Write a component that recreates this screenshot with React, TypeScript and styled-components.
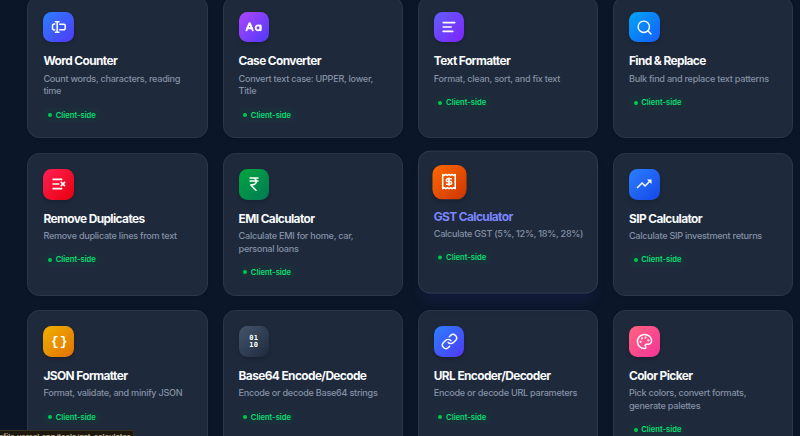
import type { ReactNode } from 'react';
import styled, { createGlobalStyle, css } from 'styled-components';
import { CaseSensitive, Link, Palette, Search } from 'lucide-react';
import { MdCurrencyRupee, MdTrendingUp } from 'react-icons/md';

interface Tool {
    name: string;
    description: string;
    gradient: string;
    icon: ReactNode;
    hovered?: boolean;
}

const CursorInputIcon = () => (
    <svg width="16" height="16" viewBox="0 0 16 16" fill="none" stroke="currentColor" strokeWidth="1.5" strokeLinecap="round" strokeLinejoin="round">
        <path d="M4.4 2.8h3.6M4.4 13.2h3.6M6.2 2.8v10.4" />
        <path d="M3.8 5H3.4A2 2 0 0 0 1.5 7v2a2 2 0 0 0 1.9 2h.4" />
        <path d="M8.8 5.2h4A1.4 1.4 0 0 1 14.2 6.6v2.8a1.4 1.4 0 0 1-1.4 1.4h-4" />
    </svg>
);

const AlignIcon = () => (
    <svg width="16" height="16" viewBox="0 0 16 16" fill="none" stroke="currentColor" strokeWidth="1.6" strokeLinecap="round">
        <path d="M2.2 3.6h11.6M2.2 8h8M2.2 12.4h9.6" />
    </svg>
);

const RemoveLinesIcon = () => (
    <svg width="16" height="16" viewBox="0 0 16 16" fill="none" stroke="currentColor" strokeWidth="1.6">
        <path d="M1.5 3.4h9.8M1.5 8h6.8M1.5 12.6h9.8" />
        <path d="M9.8 5.9l4.2 4.2M14 5.9l-4.2 4.2" />
    </svg>
);

const ReceiptIcon = () => (
    <svg width="16" height="16" viewBox="0 0 16 16" fill="none" stroke="currentColor" strokeLinejoin="round">
        <path d="M2.3 1.6l1.4.8 1.4-.8 1.45.8L8 1.6l1.45.8 1.4-.8 1.45.8 1.4-.8v12.8l-1.4-.8-1.45.8-1.4-.8-1.45.8-1.45-.8-1.45.8-1.4-.8-1.4.8z" strokeWidth="1.4" />
        <path d="M10.6 5.5H6.8a1.2 1.2 0 0 0 0 2.5h2.4a1.2 1.2 0 0 1 0 2.5H5.3M8 4.2v7.6" strokeWidth="1.4" />
    </svg>
);

const BracesIcon = () => <Braces>{'{ }'}</Braces>;

const BinaryIcon = () => (
    <Bits>
        <span>01</span>
        <span>10</span>
    </Bits>
);

const TOOLS: Tool[] = [
    {
        name: 'Word Counter',
        description: 'Count words, characters, reading time',
        gradient: '#2b7fff, #4f39f6',
        icon: <CursorInputIcon />,
    },
    {
        name: 'Case Converter',
        description: 'Convert text case: UPPER, lower, Title',
        gradient: '#ad46ff, #4f39f6',
        icon: <CaseSensitive size={17} strokeWidth={2.6} />,
    },
    {
        name: 'Text Formatter',
        description: 'Format, clean, sort, and fix text',
        gradient: '#615fff, #7f22fe',
        icon: <AlignIcon />,
    },
    {
        name: 'Find & Replace',
        description: 'Bulk find and replace text patterns',
        gradient: '#00a6f4, #155dfc',
        icon: <Search size={17} strokeWidth={2} />,
    },
    {
        name: 'Remove Duplicates',
        description: 'Remove duplicate lines from text',
        gradient: '#ff2056, #e7000b',
        icon: <RemoveLinesIcon />,
    },
    {
        name: 'EMI Calculator',
        description: 'Calculate EMI for home, car, personal loans',
        gradient: '#00a63e, #007a55',
        icon: <MdCurrencyRupee size={18} />,
    },
    {
        name: 'GST Calculator',
        description: 'Calculate GST (5%, 12%, 18%, 28%)',
        gradient: '#ff6900, #ca3500',
        icon: <ReceiptIcon />,
        hovered: true,
    },
    {
        name: 'SIP Calculator',
        description: 'Calculate SIP investment returns',
        gradient: '#2b7fff, #1447e6',
        icon: <MdTrendingUp size={18} />,
    },
    {
        name: 'JSON Formatter',
        description: 'Format, validate, and minify JSON',
        gradient: '#f0b100, #e17100',
        icon: <BracesIcon />,
    },
    {
        name: 'Base64 Encode/Decode',
        description: 'Encode or decode Base64 strings',
        gradient: '#45556c, #1d293d',
        icon: <BinaryIcon />,
    },
    {
        name: 'URL Encoder/Decoder',
        description: 'Encode or decode URL parameters',
        gradient: '#2b7fff, #4f39f6',
        icon: <Link size={17} strokeWidth={2} />,
    },
    {
        name: 'Color Picker',
        description: 'Pick colors, convert formats, generate palettes',
        gradient: '#ff637e, #f6339a',
        icon: <Palette size={17} strokeWidth={2.1} />,
    },
];

export default function App() {
    return (
        <>
            <GlobalStyle />
            <Page>
                <Grid>
                    {TOOLS.map((tool) => (
                        <ToolCard key={tool.name} tool={tool} />
                    ))}
                </Grid>
                <LinkStatus>mfile.vercel.app/tools/gst-calculator</LinkStatus>
            </Page>
        </>
    );
}

function ToolCard({ tool }: { tool: Tool }) {
    return (
        <Card $hovered={tool.hovered}>
            <IconTile $gradient={tool.gradient} $hovered={tool.hovered}>{tool.icon}</IconTile>
            <Title $hovered={tool.hovered}>{tool.name}</Title>
            <Description>{tool.description}</Description>
            <Badge>
                <Dot />
                Client-side
            </Badge>
        </Card>
    );
}

const GlobalStyle = createGlobalStyle`
  * {
    box-sizing: border-box;
  }

  body {
    margin: 0;
    background: #0c1629;
    font-family: Inter, 'Liberation Sans', sans-serif;
    overflow: hidden;
  }
`;

const Page = styled.div`
  position: relative;
  height: 436px;
  overflow: hidden;
  padding-left: 27.4px;
  background: #0c1629;
`;

const Grid = styled.div`
  display: grid;
  grid-template-columns: repeat(4, 180.4px);
  grid-auto-rows: 142.6px;
  gap: 14.8px;
  margin-top: -4.3px;
`;

const Card = styled.div<{ $hovered?: boolean }>`
  display: flex;
  flex-direction: column;
  align-items: flex-start;
  padding: 15px 13.5px 15px 15px;
  border: 1px solid #2a3649;
  border-radius: 12px;
  background: #1e293b;
  box-shadow: 0 1px 3px rgba(0, 0, 0, 0.1);
  ${({ $hovered }) => $hovered && css`
    transform: translateY(-2.4px);
    border-color: #303b50;
    box-shadow: 0 12px 14px -4px rgba(49, 65, 160, 0.14);
  `}
`;

const IconTile = styled.div<{ $gradient: string; $hovered?: boolean }>`
  display: flex;
  align-items: center;
  justify-content: center;
  flex-shrink: 0;
  width: 30.6px;
  height: 30.6px;
  border-radius: 8.5px;
  color: #fff;
  background: linear-gradient(135deg, ${({ $gradient }) => $gradient});
  box-shadow: 0 2px 4px rgba(0, 0, 0, 0.18);
  transform: ${({ $hovered }) => ($hovered ? 'scale(1.1)' : 'none')};
`;

const Braces = styled.span`
  font: bold 13px/1 'Liberation Mono', monospace;
  letter-spacing: -1.2px;
  word-spacing: -4.5px;
`;

const Bits = styled.span`
  display: flex;
  flex-direction: column;
  font: bold 7px/6.4px 'DejaVu Sans Mono', monospace;
  letter-spacing: 0.5px;

  span {
    height: 6.4px;
  }
`;

const Title = styled.h3<{ $hovered?: boolean }>`
  margin: 11px 0 4px;
  font-size: 11.9px;
  font-weight: 650;
  line-height: 15.4px;
  letter-spacing: -0.6px;
  white-space: nowrap;
  color: ${({ $hovered }) => ($hovered ? '#7c86ff' : '#f8fafc')};
`;

const Description = styled.p`
  margin: 0;
  font-size: 9.1px;
  font-weight: 450;
  line-height: 12.5px;
  letter-spacing: -0.26px;
  color: #8491a6;
`;

const Badge = styled.span`
  display: inline-flex;
  align-items: center;
  gap: 3.7px;
  height: 14px;
  margin-top: 10.4px;
  padding: 0 5px 0 4.6px;
  border-radius: 7px;
  font-size: 7.6px;
  font-weight: 600;
  color: #05df72;
  background: rgba(0, 130, 54, 0.08);
`;

const Dot = styled.i`
  width: 4px;
  height: 4px;
  border-radius: 50%;
  background: #00c950;
`;

/* Browser link preview, sits over the grid in the bottom left corner */
const LinkStatus = styled.div`
  position: absolute;
  left: 0;
  bottom: 0;
  display: flex;
  justify-content: flex-end;
  width: 134px;
  height: 6px;
  padding: 1.5px 3px 0 0;
  overflow: hidden;
  border: 1px solid #3b321d;
  border-width: 1px 1px 0 0;
  border-top-right-radius: 2px;
  background: #1e190e;
  color: #b9ae93;
  font-size: 7.4px;
  font-weight: 700;
  line-height: 9px;
  white-space: nowrap;
`;
